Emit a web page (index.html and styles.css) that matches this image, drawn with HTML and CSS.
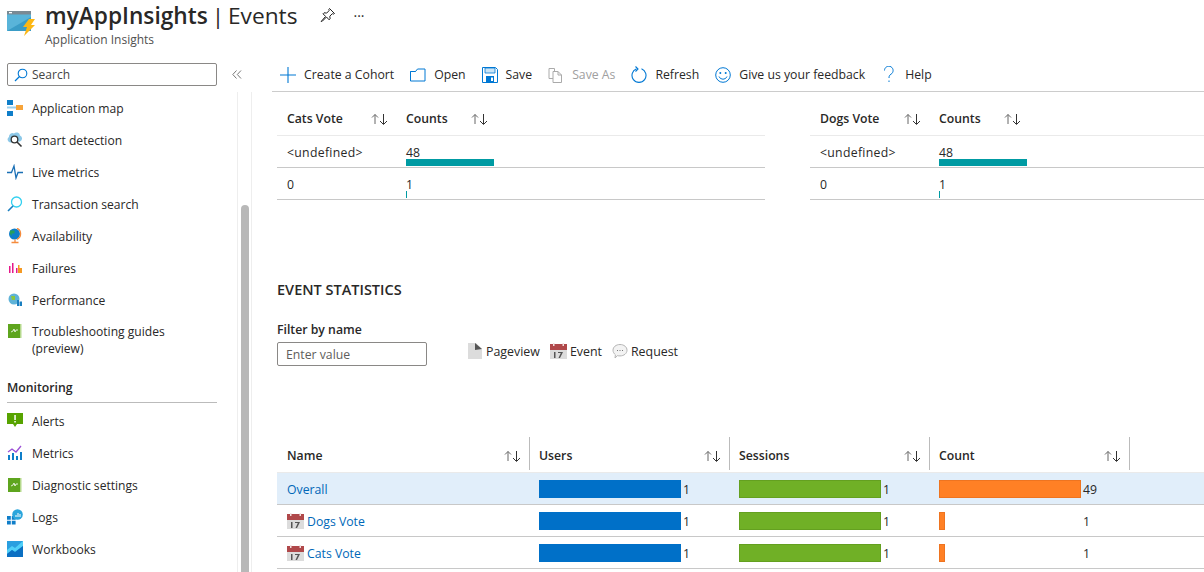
FILE: index.html
```html
<!DOCTYPE html>
<html>
<head>
  <title>myAppInsights | Events</title>
  <link rel="stylesheet" href="styles.css">
</head>
<body>
  <header class="page-header">
    <svg class="app-logo" width="28" height="28" viewBox="0 0 28 28">
      <path d="M0 3h24v20H0z" fill="#59b4d9"/>
      <path d="M0 3h24v3.500H0z" fill="#7a8a94"/>
      <path d="M0 23L24 9v14z" fill="#3a9cc6"/>
      <path d="M2 4h3v1.300H2z" fill="#fff"/>
      <path d="M22 11h6l-4 6h4L17 28l3-9h-4z" fill="#fcb714"/>
    </svg>
    <div class="title-block">
      <div class="title-row">
        <h1><b>myAppInsights</b> | Events</h1>
        <svg class="pin" width="16" height="16" viewBox="0 0 16 16"><path d="M9.500 1.500l5 5-1.200.6-1-.4-2.500 2.500.3 2.600-1 1-2.600-2.800-4.500 4.500-.8-.1 4.400-5-2.600-2.600 1-1 2.700.3 2.400-2.500-.3-1z" fill="none" stroke="#222" stroke-width="1"/></svg>
        <span class="more">···</span>
      </div>
      <div class="subtitle">Application Insights</div>
    </div>
  </header>

  <div class="layout">
    <aside class="sidebar">
      <div class="side-top">
        <div class="search-box">
          <svg width="14" height="14" viewBox="0 0 14 14"><circle cx="8.500" cy="5.500" r="4.300" fill="none" stroke="#0078d4" stroke-width="1.100"/><path d="M5.500 8.500L1 13" stroke="#0078d4" stroke-width="1.300"/></svg>
          <span>Search</span>
        </div>
        <svg class="collapse" width="10" height="9" viewBox="0 0 10 9"><path d="M4.500 .5L.8 4.500l3.700 4M9 .5L5.300 4.500 9 8.500" fill="none" stroke="#777"/></svg>
      </div>
      <div class="side-scroll">
        <nav class="side-nav">
          <a class="nav-item">
            <svg class="nav-icon" viewBox="0 0 16 16"><path d="M0 0h6v5H0zM0 11h6v5H0z" fill="#0f7ec9"/><path d="M9 5h7v5H9z" fill="#f7a43a"/><path d="M0 7.500h9" stroke="#9ad0ee" stroke-width="2"/></svg>
            Application map
          </a>
          <a class="nav-item">
            <svg class="nav-icon" viewBox="0 0 16 16"><path d="M3 10.500a3 3 0 0 1-1-5.500 3.500 3.500 0 0 1 5-3.500 3.500 3.500 0 0 1 6 2 3.200 3.200 0 0 1 0 6z" fill="#8cc8e8"/><circle cx="7.500" cy="7.500" r="3.300" fill="#fff" stroke="#333" stroke-width="1.300"/><path d="M10 10l4.500 4.500" stroke="#333" stroke-width="1.600"/></svg>
            Smart detection
          </a>
          <a class="nav-item">
            <svg class="nav-icon" viewBox="0 0 16 16"><path d="M0 8.500h4.500L7 2l2 12 2-5.500h5" fill="none" stroke="#1a6fb5" stroke-width="1.300"/></svg>
            Live metrics
          </a>
          <a class="nav-item">
            <svg class="nav-icon" viewBox="0 0 16 16"><circle cx="9.500" cy="6" r="5" fill="none" stroke="#32d0f0" stroke-width="1.300"/><path d="M6 10l-5 5" stroke="#1a7fc0" stroke-width="1.600"/></svg>
            Transaction search
          </a>
          <a class="nav-item">
            <svg class="nav-icon" viewBox="0 0 16 16"><circle cx="7.500" cy="6" r="5.500" fill="#0f7ec9"/><path d="M3 2.500h4.500v3H4.500L5 8 3 6z" fill="#27a05a"/><path d="M10 .3a6 6 0 0 1 0 11M4.500 14.500h7M8 11.500v3" fill="none" stroke="#f58b3c" stroke-width="1.300"/></svg>
            Availability
          </a>
          <a class="nav-item">
            <svg class="nav-icon" viewBox="0 0 16 16"><path d="M2 6h1.500v7H2zM5 3h1.500v10H5z" fill="#e6178a"/><path d="M9 8h1.500v5H9z" fill="#e6178a"/><path d="M11 5h1.500v3H15v5h-4z" fill="#f59a23"/></svg>
            Failures
          </a>
          <a class="nav-item">
            <svg class="nav-icon" viewBox="0 0 16 16"><circle cx="7" cy="7" r="5.500" fill="#5fb3d8"/><path d="M4 4h4v4H5z" fill="#8cc63f"/><path d="M10 8h2v6h-2zM12.500 9.500H15V14h-2.500z" fill="#1a7fc0"/></svg>
            Performance
          </a>
          <a class="nav-item nav-item-tall">
            <svg class="nav-icon" viewBox="0 0 16 16"><path d="M1 1h13v14H1z" fill="#5ea51e"/><path d="M13 1h1.500v14H13z" fill="#b5d98d"/><path d="M4 9l2-1 1-2 1 3 1-2h2" fill="none" stroke="#fff" stroke-width=".8"/></svg>
            <span>Troubleshooting guides<br>(preview)</span>
          </a>
        </nav>
        <h2 class="side-heading">Monitoring</h2>
        <nav class="side-nav">
          <a class="nav-item">
            <svg class="nav-icon" viewBox="0 0 16 16"><path d="M0 0h16v11h-6l-2 3-2-3H0z" fill="#57a300"/><path d="M7.300 2h1.500v5H7.300zM7.300 8h1.500v1.500H7.300z" fill="#fff"/></svg>
            Alerts
          </a>
          <a class="nav-item">
            <svg class="nav-icon" viewBox="0 0 16 16"><path d="M1 10h2v5H1zM5 8h2v7H5zM9 11h2v4H9zM13 7h2v8h-2z" fill="#0f7ec9"/><path d="M1 7l4-3 4 3 5-6" fill="none" stroke="#9b4fd6" stroke-width="1.300"/></svg>
            Metrics
          </a>
          <a class="nav-item">
            <svg class="nav-icon" viewBox="0 0 16 16"><path d="M1 1h13v14H1z" fill="#5ea51e"/><path d="M13 1h1.500v14H13z" fill="#b5d98d"/><path d="M4 9l2-1 1-2 1 3 1-2h2" fill="none" stroke="#fff" stroke-width=".8"/></svg>
            Diagnostic settings
          </a>
          <a class="nav-item">
            <svg class="nav-icon" viewBox="0 0 16 16"><path d="M0 7h3.800v3.800H0zM4.800 7h3.800v3.800H4.800zM0 11.800h3.800v3.800H0zM4.800 11.800h3.800v3.800H4.800z" fill="#0f7ec9"/><circle cx="10.500" cy="5.500" r="5.300" fill="#2aa5dc"/><path d="M8.500 6h1v2h-1zM10.500 4h1v4h-1zM12.500 5h1v3h-1z" fill="#fff"/></svg>
            Logs
          </a>
          <a class="nav-item">
            <svg class="nav-icon" viewBox="0 0 16 16"><path d="M0 0h16v16H0z" fill="#2a9fe0"/><path d="M0 9l5-4 3 2 8-7v5l-8 6-3-2-5 4z" fill="#50d0f8"/><path d="M0 16v-3l5-4 3 2 8-6v11z" fill="#0b6fc2"/></svg>
            Workbooks
          </a>
        </nav>
      </div>
      <div class="scrollbar"><div class="scroll-thumb"></div></div>
    </aside>

    <main class="content">
      <div class="toolbar">
        <button class="tool">
          <svg width="16" height="16" viewBox="0 0 16 16"><path d="M8 0v16M0 8h16" stroke="#0078d4" stroke-width="1.100"/></svg>
          Create a Cohort
        </button>
        <button class="tool">
          <svg width="16" height="16" viewBox="0 0 16 16"><path d="M.5 4.500v9.500h14.500V2H7.500l-2 2.500zM.5 4.500h5" fill="none" stroke="#0078d4"/></svg>
          Open
        </button>
        <button class="tool">
          <svg width="16" height="16" viewBox="0 0 16 16"><path d="M.5.5h13l2 2v13H.5z" fill="#fff" stroke="#0078d4"/><path d="M3 1h10v5H3z" fill="#cbe4f5" stroke="#0078d4" stroke-width=".8"/><path d="M4 9h8v6H4z" fill="#0078d4"/><path d="M9 10.500h2V14H9z" fill="#fff"/></svg>
          Save
        </button>
        <button class="tool tool-off">
          <svg width="16" height="16" viewBox="0 0 16 16"><path d="M1 1.500h5.500v10H1z" fill="#fff" stroke="#aaa"/><path d="M5 4.500h5l3.500 3.500v7.500H5zM10 4.500V8h3.500" fill="#fff" stroke="#aaa"/></svg>
          Save As
        </button>
        <button class="tool">
          <svg width="16" height="18" viewBox="0 0 16 18"><path d="M5.500 2.800A7 7 0 1 0 10.500 2.800" fill="none" stroke="#0078d4" stroke-width="1.100"/><path d="M4.500 .5L7 3 4.500 5.500" fill="none" stroke="#0078d4" stroke-width="1.100"/></svg>
          Refresh
        </button>
        <button class="tool">
          <svg width="16" height="16" viewBox="0 0 16 16"><circle cx="8" cy="8" r="7.300" fill="none" stroke="#0078d4"/><circle cx="5.300" cy="6" r="1" fill="#0078d4"/><circle cx="10.700" cy="6" r="1" fill="#0078d4"/><path d="M4 9.500a4.300 4.300 0 0 0 8 0" fill="none" stroke="#0078d4"/></svg>
          Give us your feedback
        </button>
        <button class="tool tool-help">
          <svg width="14" height="17" viewBox="0 0 14 17"><path d="M1.500 4.500a4.300 4.300 0 1 1 6.500 3.700c-1.500 1-2 1.800-2 3.800" fill="none" stroke="#0078d4"/><path d="M5.500 14.500h1v1.500h-1z" fill="#0078d4"/></svg>
          Help
        </button>
      </div>

      <section class="vote-tables">
        <div class="vote-table">
          <div class="vote-row vote-head">
            <span class="vote-name">Cats Vote<svg class="sort" viewBox="0 0 17 12"><use href="#sort-arrows"/></svg></span>
            <span class="vote-count">Counts<svg class="sort" viewBox="0 0 17 12"><use href="#sort-arrows"/></svg></span>
          </div>
          <div class="vote-row">
            <span class="vote-name vote-undef">&lt;undefined&gt;</span>
            <span class="vote-count"><span class="vote-num">48</span><span class="teal-bar" style="width: 88px"></span></span>
          </div>
          <div class="vote-row">
            <span class="vote-name">0</span>
            <span class="vote-count"><span class="vote-num">1</span><span class="teal-bar" style="width: 1px"></span></span>
          </div>
        </div>
        <div class="vote-table">
          <div class="vote-row vote-head">
            <span class="vote-name">Dogs Vote<svg class="sort" viewBox="0 0 17 12"><use href="#sort-arrows"/></svg></span>
            <span class="vote-count">Counts<svg class="sort" viewBox="0 0 17 12"><use href="#sort-arrows"/></svg></span>
          </div>
          <div class="vote-row">
            <span class="vote-name vote-undef">&lt;undefined&gt;</span>
            <span class="vote-count"><span class="vote-num">48</span><span class="teal-bar" style="width: 88px"></span></span>
          </div>
          <div class="vote-row">
            <span class="vote-name">0</span>
            <span class="vote-count"><span class="vote-num">1</span><span class="teal-bar" style="width: 1px"></span></span>
          </div>
        </div>
      </section>

      <section class="stats">
        <h3>EVENT STATISTICS</h3>
        <div class="filter-row">
          <div class="filter">
            <label for="filter-input">Filter by name</label>
            <input type="text" id="filter-input" placeholder="Enter value">
          </div>
          <div class="legend">
            <span class="legend-item">
              <svg width="16" height="16" viewBox="0 0 16 16"><path d="M1 0h8l6 6v10H1z" fill="#dcdcdc"/><path d="M8 0l7 6-7 1z" fill="#555"/></svg>
              Pageview
            </span>
            <span class="legend-item">
              <svg width="17" height="16" viewBox="0 0 17 16"><use href="#calendar"/></svg>
              Event
            </span>
            <span class="legend-item">
              <svg width="16" height="16" viewBox="0 0 16 16"><path d="M8 1.500c4 0 7 2.500 7 5.700s-3 5.700-7 5.700c-1 0-1.500 0-2.500-.3L3 15l.4-3.200C2 10.700 1 9 1 7.200 1 4 4 1.500 8 1.500z" fill="#f3f3f3" stroke="#b5b5b5"/><path d="M5 7h1v1H5zM7.500 7h1v1h-1zM10 7h1v1h-1z" fill="#777"/></svg>
              Request
            </span>
          </div>
        </div>

        <table class="stats-table">
          <thead>
            <tr>
              <th class="col-name"><div class="th-in">Name<svg class="sort" viewBox="0 0 17 12"><use href="#sort-arrows"/></svg></div></th>
              <th class="col-num"><div class="th-in">Users<svg class="sort" viewBox="0 0 17 12"><use href="#sort-arrows"/></svg></div></th>
              <th class="col-num"><div class="th-in">Sessions<svg class="sort" viewBox="0 0 17 12"><use href="#sort-arrows"/></svg></div></th>
              <th class="col-num"><div class="th-in">Count<svg class="sort" viewBox="0 0 17 12"><use href="#sort-arrows"/></svg></div></th>
              <th class="col-end"><div class="th-in"></div></th>
            </tr>
          </thead>
          <tbody>
            <tr class="row-selected">
              <td><a>Overall</a></td>
              <td><div class="cell-bar"><span class="bar bar-users" style="width: 142px"></span><span class="bar-num">1</span></div></td>
              <td><div class="cell-bar"><span class="bar bar-sessions" style="width: 142px"></span><span class="bar-num">1</span></div></td>
              <td><div class="cell-bar"><span class="bar bar-count" style="width: 142px"></span><span class="bar-num">49</span></div></td>
              <td></td>
            </tr>
            <tr>
              <td><a><svg class="cal" width="17" height="16" viewBox="0 0 17 16"><use href="#calendar"/></svg>Dogs Vote</a></td>
              <td><div class="cell-bar"><span class="bar bar-users" style="width: 142px"></span><span class="bar-num">1</span></div></td>
              <td><div class="cell-bar"><span class="bar bar-sessions" style="width: 142px"></span><span class="bar-num">1</span></div></td>
              <td><div class="cell-bar"><span class="bar-track"><span class="bar bar-count" style="width: 6px"></span></span><span class="bar-num">1</span></div></td>
              <td></td>
            </tr>
            <tr>
              <td><a><svg class="cal" width="17" height="16" viewBox="0 0 17 16"><use href="#calendar"/></svg>Cats Vote</a></td>
              <td><div class="cell-bar"><span class="bar bar-users" style="width: 142px"></span><span class="bar-num">1</span></div></td>
              <td><div class="cell-bar"><span class="bar bar-sessions" style="width: 142px"></span><span class="bar-num">1</span></div></td>
              <td><div class="cell-bar"><span class="bar-track"><span class="bar bar-count" style="width: 6px"></span></span><span class="bar-num">1</span></div></td>
              <td></td>
            </tr>
          </tbody>
        </table>
      </section>
    </main>
  </div>

  <!-- shared icons -->
  <svg class="icon-defs" width="0" height="0">
    <symbol id="sort-arrows" viewBox="0 0 17 12">
      <path d="M4 11V1.500M1 4.500l3-3 3 3" fill="none" stroke="#666" stroke-width="1"/>
      <path d="M12.500 1v10M9 8l3.500 3.500L16 8" fill="none" stroke="#333" stroke-width="1"/>
    </symbol>
    <symbol id="calendar" viewBox="0 0 17 16">
      <path d="M0 1h17v15H0z" fill="#dcdcdc"/>
      <path d="M0 1h17v6H0z" fill="#b0484a"/>
      <path d="M3 0h1.500v3H3zM12.500 0H14v3h-1.500z" fill="#f2dede"/>
      <path d="M4 9h1.500v6H4zM8 9h5l-3 6H8.500l2.300-5H8z" fill="#555"/>
    </symbol>
  </svg>
</body>
</html>
```

FILE: styles.css
```css
* {
  box-sizing: border-box;
}

body {
  margin: 0;
  height: 572px;
  overflow: hidden;
  background: #fff;
  color: #292827;
  font-family: "Open Sans", "Noto Sans", Arial, sans-serif;
  font-size: 12.25px;
}

.icon-defs {
  display: block;
}

/* Header */
.page-header {
  display: flex;
  height: 58px;
  padding-left: 7px;
}

.app-logo {
  margin: 8px 10px 0 0;
}

.title-row {
  display: flex;
  align-items: center;
  height: 30px;
}

h1 {
  margin: 0;
  font-size: 22.7px;
  font-weight: 400;
  word-spacing: -2px;
  color: #292827;
}

h1 b {
  font-weight: 600;
}

.pin {
  margin-left: 22px;
}

.more {
  margin-left: 18px;
  font-size: 14px;
}

.subtitle {
  margin-top: 1px;
  font-size: 12px;
  color: #505050;
}

/* Sidebar */
.layout {
  display: flex;
  height: 514px;
}

.sidebar {
  display: grid;
  grid-template-columns: 230px 15px;
  grid-template-rows: 34px 1fr;
  width: 252px;
  padding-left: 7px;
  overflow: hidden;
}

.side-top {
  grid-column: 1 / 3;
  display: flex;
  align-items: flex-start;
  padding-top: 5px;
}

.search-box {
  display: flex;
  align-items: center;
  gap: 4px;
  width: 210px;
  height: 23px;
  padding-left: 6px;
  border: 1px solid #8a8886;
  border-radius: 2px;
  font-size: 12px;
  color: #444;
}

.collapse {
  margin: 7px 0 0 15px;
}

.side-nav {
  display: flex;
  flex-direction: column;
}

.nav-item {
  display: flex;
  align-items: center;
  gap: 9px;
  height: 32px;
  font-size: 12.1px;
  color: #292827;
}

.nav-item-tall {
  height: 48px;
  line-height: 17px;
}

.nav-item-tall .nav-icon {
  align-self: flex-start;
  margin-top: 7px;
}

.nav-icon {
  flex: none;
  width: 16px;
  height: 16px;
}

.side-heading {
  margin: 15px 0 2px;
  padding-bottom: 6px;
  width: 210px;
  border-bottom: 1px solid #bbb;
  font-size: 12.25px;
  font-weight: 600;
}

.scrollbar {
  padding: 113px 2px 0 3px;
  border-left: 1px solid #eee;
  border-right: 1px solid #eee;
}

.scroll-thumb {
  height: 400px;
  background: #b8b8b8;
  border-radius: 4px 4px 0 0;
}

/* Toolbar */
.content {
  flex: 1;
  min-width: 0;
  padding-left: 20px;
}

.toolbar {
  display: flex;
  align-items: center;
  gap: 16px;
  height: 34px;
  padding-left: 8px;
  border-bottom: 1px solid #ccc;
}

.tool {
  display: flex;
  align-items: center;
  gap: 8px;
  padding: 0;
  border: 0;
  background: none;
  font: inherit;
  color: #292827;
}

.tool-off {
  color: #a0a0a0;
}

.tool-help {
  margin-left: 2px;
}

/* Votes */
.vote-tables {
  display: flex;
  gap: 45px;
  padding: 10px 0 0 5px;
}

.vote-table {
  flex: none;
  width: 488px;
}

.vote-table + .vote-table {
  flex: 1;
  width: auto;
  min-width: 0;
}

.vote-row {
  display: flex;
  height: 32px;
  border-bottom: 1px solid #c8c8c8;
}

.vote-head {
  height: 34px;
  align-items: center;
  border-bottom-color: #eaeaea;
  font-weight: 600;
}

.vote-name {
  display: flex;
  align-items: center;
  width: 129px;
  padding: 0 18px 0 10px;
}

.vote-row:not(.vote-head) .vote-name {
  padding-top: 2px;
}

.vote-undef {
  letter-spacing: .3px;
}

.vote-count {
  display: flex;
  align-items: center;
}

.vote-head .vote-count {
  width: 82px;
}

.vote-row:not(.vote-head) .vote-count {
  flex-direction: column;
  align-items: flex-start;
  padding-top: 10px;
}

.vote-num {
  line-height: 13px;
}

.teal-bar {
  display: block;
  height: 7px;
  background: #009ba3;
}

.sort {
  flex: none;
  width: 17px;
  height: 12px;
  margin-left: auto;
}

/* Statistics */
.stats {
  padding-left: 5px;
}

h3 {
  margin: 81px 0 0;
  font-size: 14.5px;
  line-height: 18px;
  font-weight: 600;
  color: #292827;
}

.filter-row {
  display: flex;
  margin-top: 22px;
}

.filter label {
  display: block;
  font-weight: 600;
  margin-bottom: 4px;
}

.filter input {
  display: block;
  width: 150px;
  height: 24px;
  padding: 0 8px;
  border: 1px solid #8a8886;
  border-radius: 2px;
  font: inherit;
}

.filter input::placeholder {
  color: #605e5c;
}

.legend {
  display: flex;
  gap: 10px;
  margin: 21px 0 0 40px;
  height: 18px;
  align-items: center;
  font-size: 12.4px;
}

.legend-item {
  display: flex;
  align-items: center;
  gap: 3px;
}

.stats-table {
  width: 927px;
  margin-top: 71px;
  border-collapse: collapse;
  table-layout: fixed;
}

.stats-table th {
  height: 35px;
  padding: 0;
  text-align: left;
  vertical-align: top;
  font-weight: 600;
  border-bottom: 1px solid #eaeaea;
}

.col-name {
  width: 252px;
}

.col-num {
  width: 200px;
}

.th-in {
  display: flex;
  align-items: center;
  height: 33px;
  padding: 4px 8px 0 10px;
}

.col-num .th-in,
.col-end .th-in {
  padding-left: 9px;
  border-left: 1px solid #bbb;
}

.stats-table td {
  height: 32px;
  padding: 2px 0 0 10px;
  border-bottom: 1px solid #c8c8c8;
}

.stats-table a {
  display: flex;
  align-items: center;
  gap: 3px;
  color: #0067b8;
}

.row-selected {
  background: #e1eefa;
}

.cell-bar {
  display: flex;
  align-items: center;
}

.bar {
  display: block;
  height: 18px;
}

.bar-track {
  display: block;
  width: 142px;
}

.bar-num {
  margin-left: 2px;
}

.bar-users {
  background: #0070c8;
}

.bar-sessions {
  background: #70b026;
  border: 1px solid #64a020;
}

.bar-count {
  background: #ff8025;
  border: 1px solid #ee7420;
}
```
